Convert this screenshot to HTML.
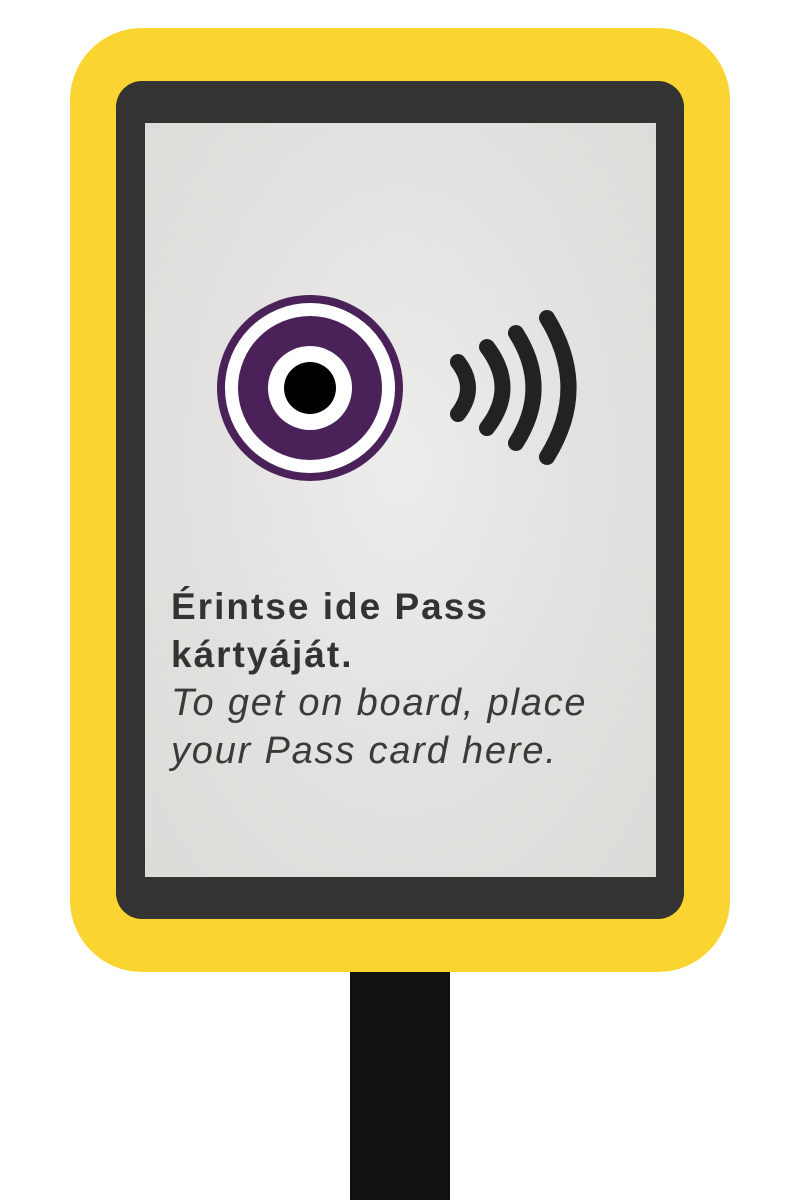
<!DOCTYPE html>
<html><head><meta charset="utf-8"><style>
html,body{margin:0;padding:0;background:#fff;width:800px;height:1200px;overflow:hidden;position:relative;font-family:"Liberation Sans",sans-serif}
.y{position:absolute;left:70px;top:28px;width:660px;height:944px;background:#fad532;border-radius:72px}
.f{position:absolute;left:116px;top:81px;width:568px;height:838px;background:#333;border-radius:26px}
.s{position:absolute;left:145px;top:123px;width:511px;height:754px;background:radial-gradient(ellipse at 50% 45%,#ededec 0%,#e3e2e0 50%,#dcdbd8 100%)}
.p{position:absolute;left:350px;top:972px;width:100px;height:228px;background:#111}
.t{position:absolute;left:171px;top:583px;color:#333;white-space:nowrap}
.b{font-weight:bold;font-size:37px;line-height:48px;letter-spacing:2px}
.i{font-style:italic;font-size:38px;line-height:48px;color:#3a3a3a;letter-spacing:1.8px}
</style></head><body>
<div class="y"></div><div class="f"></div><div class="s"></div><div class="p"></div>
<svg style="position:absolute;left:0;top:0" width="800" height="1200">
<circle cx="310" cy="388" r="93" fill="#4a2259"/>
<circle cx="310" cy="388" r="85" fill="#fff"/>
<circle cx="310" cy="388" r="72" fill="#4a2259"/>
<circle cx="310" cy="388" r="42" fill="#fff"/>
<circle cx="310" cy="388" r="26" fill="#000"/>
<g fill="none" stroke="#222" stroke-width="16" stroke-linecap="round">
<path d="M458 362 Q478 388 458 414"/>
<path d="M487 347 Q518 388 487 428"/>
<path d="M516 333 Q551 388 516 443"/>
<path d="M547 318 Q590 388 547 457"/>
</g></svg>
<div class="t"><div class="b">Érintse ide Pass<br>kártyáját.</div><div class="i">To get on board, place<br>your Pass card here.</div></div>
</body></html>
